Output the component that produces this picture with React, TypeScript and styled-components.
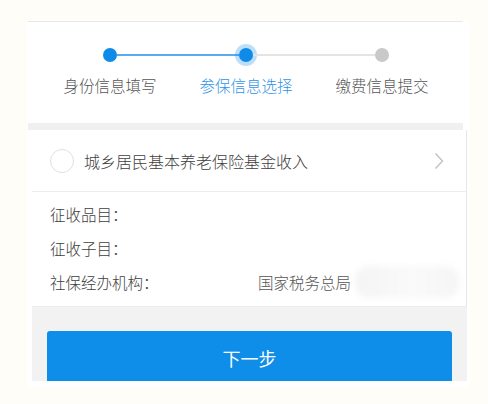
import React from "react";
import styled, { createGlobalStyle } from "styled-components";

const Global = createGlobalStyle`
  html, body { margin: 0; padding: 0; background: #fffdf8; }
  body { font-family: "Noto Sans CJK SC", "Noto Sans", sans-serif; }
`;

const Page = styled.div`
  width: 488px;
  height: 404px;
  padding: 21px 0 0 27px;
  box-sizing: border-box;
`;

const Frame = styled.div`
  width: 443px;
  height: 366px;
  background: #ffffff;
  display: flex;
  flex-direction: column;
  padding-left: 1px;
  box-sizing: border-box;
`;

const Header = styled.div`
  width: 435px;
  height: 102px;
  border-top: 1px solid #e8e8e8;
  box-sizing: border-box;
  padding: 26px 0 0 14px;
`;

const Track = styled.div`
  display: flex;
  align-items: center;
  height: 14px;
  margin-left: 61px;
  width: 286px;
`;

const Dot = styled.span<{ $state: "done" | "active" | "todo" }>`
  width: 14px;
  height: 14px;
  border-radius: 50%;
  flex: none;
  background: ${(p) => (p.$state === "todo" ? "#c9c9c9" : "#0e8be8")};
  box-shadow: ${(p) => (p.$state === "active" ? "0 0 0 4px rgba(14,139,232,0.28)" : "none")};
`;

const Line = styled.span<{ $on?: boolean }>`
  flex: 1;
  height: 2px;
  background: ${(p) => (p.$on ? "#5aaaf0" : "#e4e4e4")};
`;

const Labels = styled.div`
  display: grid;
  grid-template-columns: repeat(3, 136px);
  margin-top: 13px;
`;

const Label = styled.div<{ $active?: boolean }>`
  text-align: center;
  font-size: 15.5px;
  line-height: 20px;
  font-weight: 300;
  color: ${(p) => (p.$active ? "#2f93e6" : "#555555")};
`;

const Band = styled.div`
  width: 435px;
  height: 7px;
  background: #f0f0f0;
`;

const Card = styled.div`
  margin-left: 4px;
  width: 435px;
  display: flex;
  flex-direction: column;
`;

const ItemRow = styled.div`
  height: 62px;
  display: flex;
  align-items: center;
  padding: 0 22px 0 18px;
  border-bottom: 1px solid #ececec;
  border-right: 1px solid #e6e6e6;
  box-sizing: border-box;
`;

const Radio = styled.span`
  width: 24px;
  height: 24px;
  border-radius: 50%;
  border: 1.5px solid #e0e0e0;
  box-sizing: border-box;
  flex: none;
`;

const ItemText = styled.span`
  margin-left: 10px;
  flex: 1;
  font-size: 16px;
  font-weight: 300;
  color: #404040;
`;

const Info = styled.div`
  padding: 5px 0 7px 18px;
  border-right: 1px solid #e6e6e6;
  border-bottom: 1px solid #ededed;
`;

const InfoRow = styled.div`
  display: grid;
  grid-template-columns: 208px 1fr;
  align-items: center;
  height: 34px;
  font-size: 15.5px;
  font-weight: 300;
  color: #404040;
`;

const Value = styled.div`
  display: flex;
  align-items: center;
  color: #555555;
`;

const Smudge = styled.span`
  display: inline-block;
  width: 104px;
  height: 32px;
  margin-left: 4px;
  border-radius: 14px;
  background: linear-gradient(90deg, #f4f4f4, #fafafa 55%, #f5f5f5);
  filter: blur(3px);
`;

const Footer = styled.div`
  margin-left: 4px;
  width: 435px;
  height: 74px;
  background: #f2f2f2;
  padding: 24px 15px 0 15px;
  box-sizing: border-box;
  overflow: hidden;
`;

const NextButton = styled.button`
  width: 100%;
  height: 56px;
  border: none;
  border-radius: 3px;
  background: #0e8de9;
  color: #ffffff;
  font-family: "Noto Sans CJK SC", sans-serif;
  font-size: 18px;
  padding: 0 0 2px 0;
`;

const Chevron = () => (
  <svg width="10" height="18" viewBox="0 0 10 18">
    <polyline points="1.5,1.5 8.5,9 1.5,16.5" fill="none" stroke="#c4c4c4" strokeWidth="1.5" />
  </svg>
);

export default function App() {
  return (
    <>
      <Global />
      <Page>
        <Frame>
          <Header>
            <Track>
              <Dot $state="done" />
              <Line $on />
              <Dot $state="active" />
              <Line />
              <Dot $state="todo" />
            </Track>
            <Labels>
              <Label>身份信息填写</Label>
              <Label $active>参保信息选择</Label>
              <Label>缴费信息提交</Label>
            </Labels>
          </Header>
          <Band />
          <Card>
            <ItemRow>
              <Radio />
              <ItemText>城乡居民基本养老保险基金收入</ItemText>
              <Chevron />
            </ItemRow>
            <Info>
              <InfoRow>
                <span>征收品目：</span>
                <span />
              </InfoRow>
              <InfoRow>
                <span>征收子目：</span>
                <span />
              </InfoRow>
              <InfoRow>
                <span>社保经办机构：</span>
                <Value>
                  国家税务总局
                  <Smudge />
                </Value>
              </InfoRow>
            </Info>
          </Card>
          <Footer>
            <NextButton>下一步</NextButton>
          </Footer>
        </Frame>
      </Page>
    </>
  );
}
